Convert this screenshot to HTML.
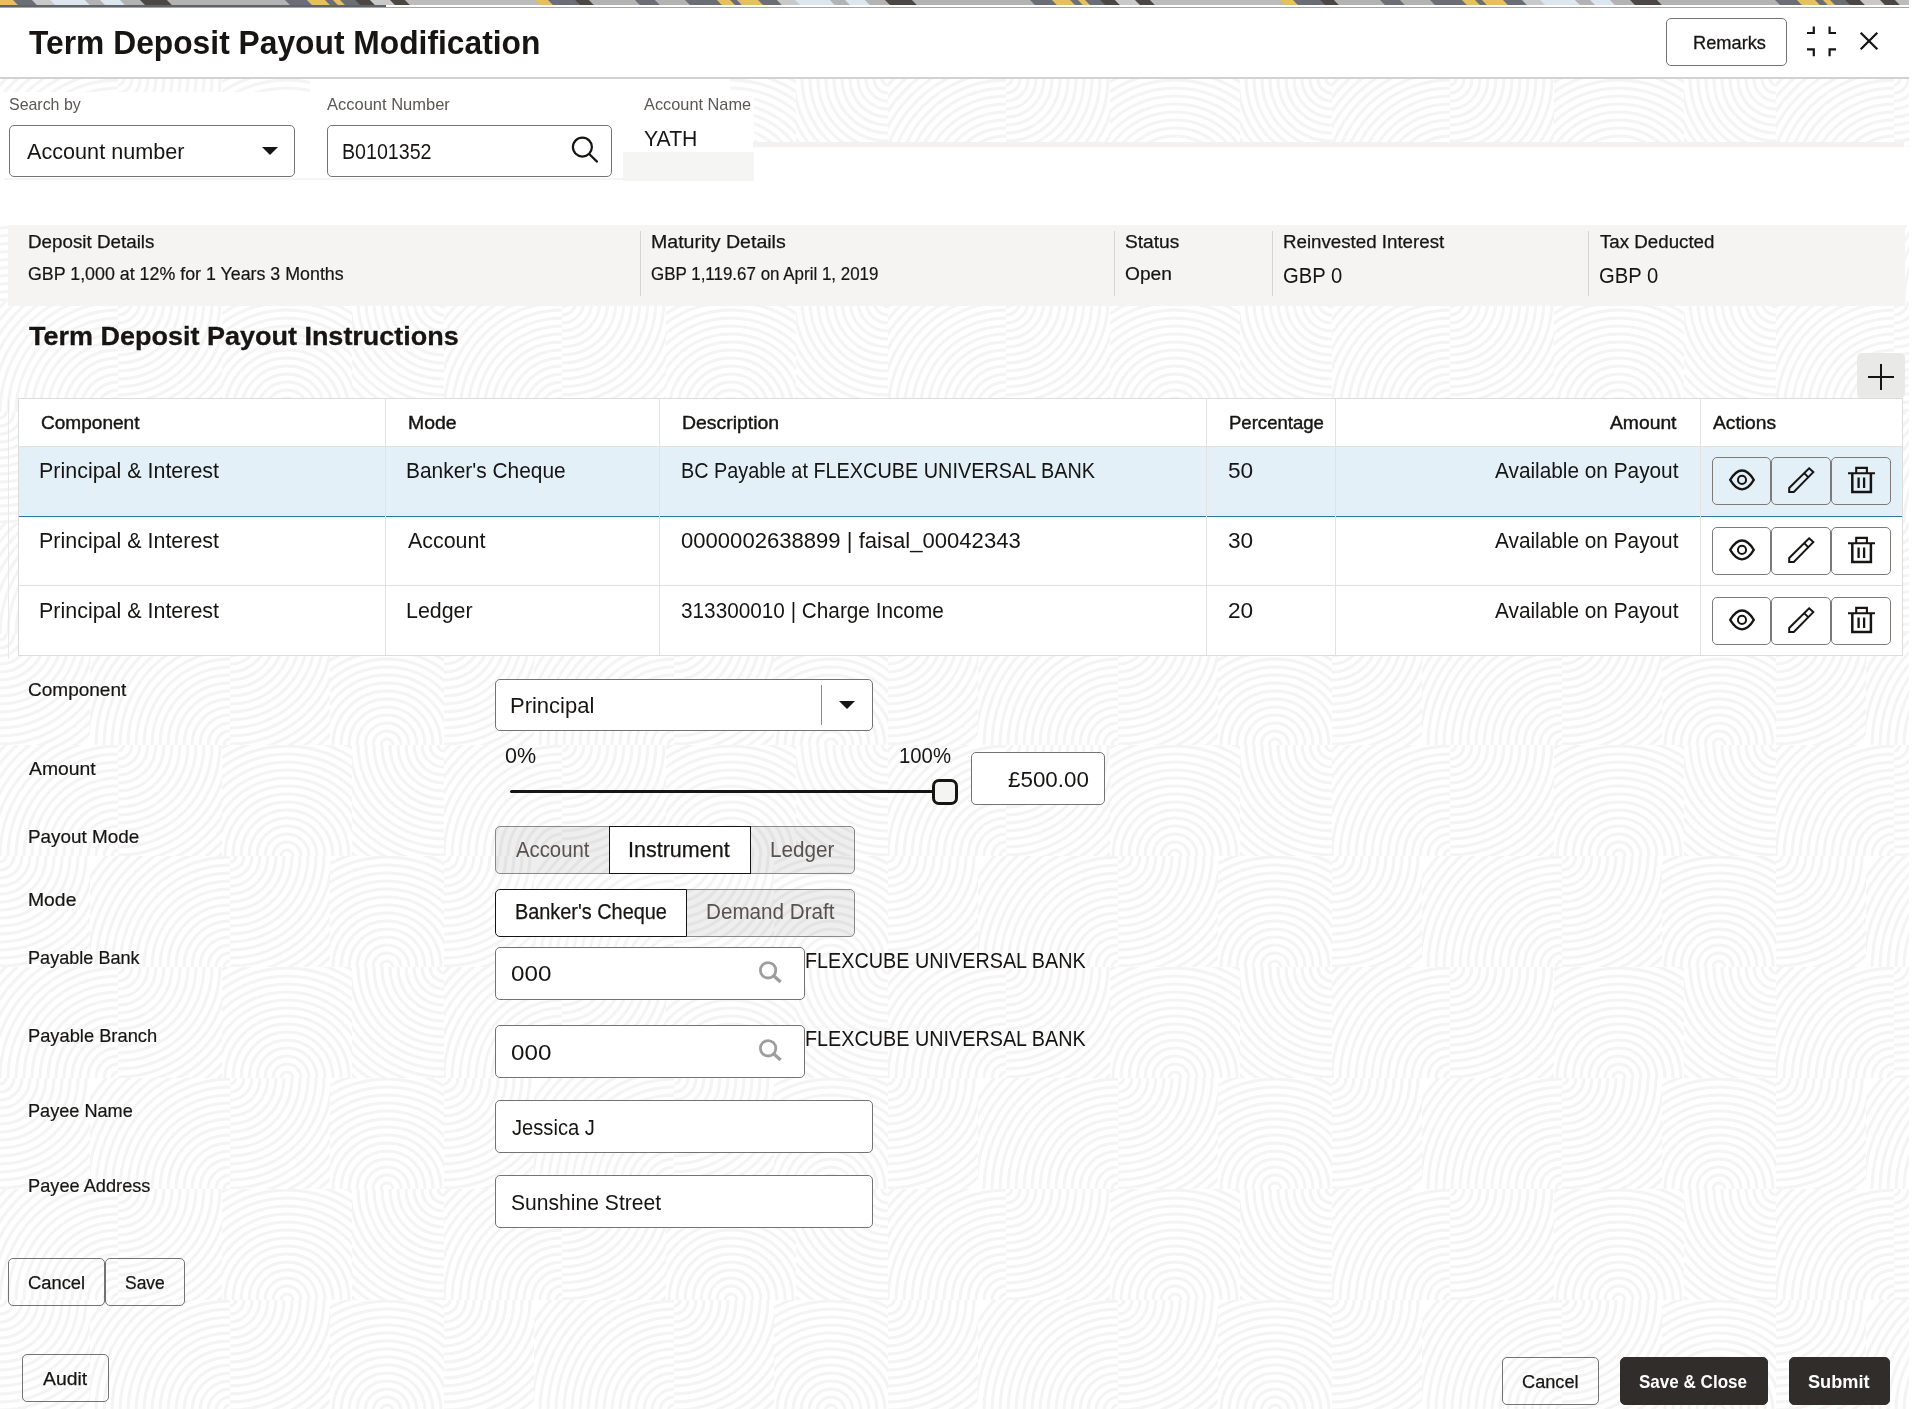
<!DOCTYPE html>
<html lang="en">
<head>
<meta charset="utf-8">
<title>Term Deposit Payout Modification</title>
<style>
html,body{margin:0;padding:0;background:#fff;}
body{width:1916px;height:1409px;overflow:hidden;position:relative;font-family:"Liberation Sans",sans-serif;}
#page{position:absolute;left:0;top:0;width:1916px;height:1409px;overflow:hidden;background:#fff;}
.abs,.t,.box,.btn,.seg{position:absolute;box-sizing:border-box;}
.t{white-space:pre;transform-origin:0 0;font-family:"Liberation Sans",sans-serif;}
#bg{left:0;top:79px;width:1909px;height:1330px;}
.white{background:#fff;}
.box{background:#fff;border:1px solid #76726f;border-radius:5px;}
.btn{background:transparent;border:1px solid #76726f;border-radius:5px;}
.btn.dark{background:#312d2a;border-color:#312d2a;}
.abtn{position:absolute;box-sizing:border-box;border:1px solid #7d7a78;border-radius:5px;}
.seg{border:1px solid #8b8885;background:rgba(22,21,19,0.07);}
.seg.sel{background:#fff;border-color:#161513;}
.vline{position:absolute;width:1px;background:#d6d4d2;}
.hline{position:absolute;height:1px;background:#e3e1df;}
svg{position:absolute;overflow:visible;}
</style>
</head>
<body>
<div id="page">
<!-- patterned page background -->
<svg id="bg" class="abs" width="1909" height="1330">
<defs><clipPath id="c0"><rect x="0" y="0" width="118" height="111"/></clipPath><clipPath id="c1"><rect x="118" y="0" width="104" height="111"/></clipPath><clipPath id="c2"><rect x="222" y="0" width="130" height="111"/></clipPath><clipPath id="c3"><rect x="352" y="0" width="92" height="111"/></clipPath><clipPath id="c4"><rect x="0" y="111" width="90" height="111"/></clipPath><clipPath id="c5"><rect x="90" y="111" width="140" height="111"/></clipPath><clipPath id="c6"><rect x="230" y="111" width="100" height="111"/></clipPath><clipPath id="c7"><rect x="330" y="111" width="114" height="111"/></clipPath>
<pattern id="pt" width="444" height="222" patternUnits="userSpaceOnUse">
<rect width="444" height="222" fill="#ffffff"/>
<g fill="none" stroke="#f4f4f4" stroke-width="3">
<g clip-path="url(#c0)"><circle cx="118" cy="111" r="6"/><circle cx="118" cy="111" r="14"/><circle cx="118" cy="111" r="22"/><circle cx="118" cy="111" r="30"/><circle cx="118" cy="111" r="38"/><circle cx="118" cy="111" r="46"/><circle cx="118" cy="111" r="54"/><circle cx="118" cy="111" r="62"/><circle cx="118" cy="111" r="70"/><circle cx="118" cy="111" r="78"/><circle cx="118" cy="111" r="86"/><circle cx="118" cy="111" r="94"/><circle cx="118" cy="111" r="102"/><circle cx="118" cy="111" r="110"/><circle cx="118" cy="111" r="118"/><circle cx="118" cy="111" r="126"/><circle cx="118" cy="111" r="134"/><circle cx="118" cy="111" r="142"/><circle cx="118" cy="111" r="150"/><circle cx="118" cy="111" r="158"/></g><g clip-path="url(#c1)"><circle cx="118" cy="0" r="6"/><circle cx="118" cy="0" r="14"/><circle cx="118" cy="0" r="22"/><circle cx="118" cy="0" r="30"/><circle cx="118" cy="0" r="38"/><circle cx="118" cy="0" r="46"/><circle cx="118" cy="0" r="54"/><circle cx="118" cy="0" r="62"/><circle cx="118" cy="0" r="70"/><circle cx="118" cy="0" r="78"/><circle cx="118" cy="0" r="86"/><circle cx="118" cy="0" r="94"/><circle cx="118" cy="0" r="102"/><circle cx="118" cy="0" r="110"/><circle cx="118" cy="0" r="118"/><circle cx="118" cy="0" r="126"/><circle cx="118" cy="0" r="134"/><circle cx="118" cy="0" r="142"/><circle cx="118" cy="0" r="150"/></g><g clip-path="url(#c2)"><circle cx="287" cy="111" r="6"/><circle cx="287" cy="111" r="14"/><circle cx="287" cy="111" r="22"/><circle cx="287" cy="111" r="30"/><circle cx="287" cy="111" r="38"/><circle cx="287" cy="111" r="46"/><circle cx="287" cy="111" r="54"/><circle cx="287" cy="111" r="62"/><circle cx="287" cy="111" r="70"/><circle cx="287" cy="111" r="78"/><circle cx="287" cy="111" r="86"/><circle cx="287" cy="111" r="94"/><circle cx="287" cy="111" r="102"/><circle cx="287" cy="111" r="110"/><circle cx="287" cy="111" r="118"/><circle cx="287" cy="111" r="126"/></g><g clip-path="url(#c3)"><circle cx="444" cy="0" r="6"/><circle cx="444" cy="0" r="14"/><circle cx="444" cy="0" r="22"/><circle cx="444" cy="0" r="30"/><circle cx="444" cy="0" r="38"/><circle cx="444" cy="0" r="46"/><circle cx="444" cy="0" r="54"/><circle cx="444" cy="0" r="62"/><circle cx="444" cy="0" r="70"/><circle cx="444" cy="0" r="78"/><circle cx="444" cy="0" r="86"/><circle cx="444" cy="0" r="94"/><circle cx="444" cy="0" r="102"/><circle cx="444" cy="0" r="110"/><circle cx="444" cy="0" r="118"/><circle cx="444" cy="0" r="126"/><circle cx="444" cy="0" r="134"/><circle cx="444" cy="0" r="142"/></g><g clip-path="url(#c4)"><circle cx="0" cy="111" r="6"/><circle cx="0" cy="111" r="14"/><circle cx="0" cy="111" r="22"/><circle cx="0" cy="111" r="30"/><circle cx="0" cy="111" r="38"/><circle cx="0" cy="111" r="46"/><circle cx="0" cy="111" r="54"/><circle cx="0" cy="111" r="62"/><circle cx="0" cy="111" r="70"/><circle cx="0" cy="111" r="78"/><circle cx="0" cy="111" r="86"/><circle cx="0" cy="111" r="94"/><circle cx="0" cy="111" r="102"/><circle cx="0" cy="111" r="110"/><circle cx="0" cy="111" r="118"/><circle cx="0" cy="111" r="126"/><circle cx="0" cy="111" r="134"/></g><g clip-path="url(#c5)"><circle cx="230" cy="222" r="6"/><circle cx="230" cy="222" r="14"/><circle cx="230" cy="222" r="22"/><circle cx="230" cy="222" r="30"/><circle cx="230" cy="222" r="38"/><circle cx="230" cy="222" r="46"/><circle cx="230" cy="222" r="54"/><circle cx="230" cy="222" r="62"/><circle cx="230" cy="222" r="70"/><circle cx="230" cy="222" r="78"/><circle cx="230" cy="222" r="86"/><circle cx="230" cy="222" r="94"/><circle cx="230" cy="222" r="102"/><circle cx="230" cy="222" r="110"/><circle cx="230" cy="222" r="118"/><circle cx="230" cy="222" r="126"/><circle cx="230" cy="222" r="134"/><circle cx="230" cy="222" r="142"/><circle cx="230" cy="222" r="150"/><circle cx="230" cy="222" r="158"/><circle cx="230" cy="222" r="166"/></g><g clip-path="url(#c6)"><circle cx="230" cy="111" r="6"/><circle cx="230" cy="111" r="14"/><circle cx="230" cy="111" r="22"/><circle cx="230" cy="111" r="30"/><circle cx="230" cy="111" r="38"/><circle cx="230" cy="111" r="46"/><circle cx="230" cy="111" r="54"/><circle cx="230" cy="111" r="62"/><circle cx="230" cy="111" r="70"/><circle cx="230" cy="111" r="78"/><circle cx="230" cy="111" r="86"/><circle cx="230" cy="111" r="94"/><circle cx="230" cy="111" r="102"/><circle cx="230" cy="111" r="110"/><circle cx="230" cy="111" r="118"/><circle cx="230" cy="111" r="126"/><circle cx="230" cy="111" r="134"/><circle cx="230" cy="111" r="142"/></g><g clip-path="url(#c7)"><circle cx="387" cy="222" r="6"/><circle cx="387" cy="222" r="14"/><circle cx="387" cy="222" r="22"/><circle cx="387" cy="222" r="30"/><circle cx="387" cy="222" r="38"/><circle cx="387" cy="222" r="46"/><circle cx="387" cy="222" r="54"/><circle cx="387" cy="222" r="62"/><circle cx="387" cy="222" r="70"/><circle cx="387" cy="222" r="78"/><circle cx="387" cy="222" r="86"/><circle cx="387" cy="222" r="94"/><circle cx="387" cy="222" r="102"/><circle cx="387" cy="222" r="110"/><circle cx="387" cy="222" r="118"/></g>
</g>
</pattern>
</defs>
<rect width="1909" height="1330" fill="url(#pt)"/>
</svg>

<!-- top banner strip -->
<svg class="abs" style="left:0;top:0;overflow:hidden" width="1909" height="8">
<rect width="1909" height="6" fill="#a9a9a8"/>
<g transform="skewX(45)"><rect x="-28" y="0" width="13.3" height="5.2" fill="#e6bf5f"/><rect x="-15" y="0" width="7.3" height="5.2" fill="#6b6f75"/><rect x="-8" y="0" width="3.3" height="5.2" fill="#e6bf5f"/><rect x="-5" y="0" width="18.3" height="5.2" fill="#e6bf5f"/><rect x="13" y="0" width="19.3" height="5.2" fill="#6b6f75"/><rect x="32" y="0" width="18.3" height="5.2" fill="#c9c9c9"/><rect x="50" y="0" width="35.3" height="5.2" fill="#dbe6ef"/><rect x="85" y="0" width="15.3" height="5.2" fill="#b3b3b3"/><rect x="100" y="0" width="20.3" height="5.2" fill="#dbe6ef"/><rect x="120" y="0" width="20.3" height="5.2" fill="#b3b3b3"/><rect x="140" y="0" width="27.3" height="5.2" fill="#4a4744"/><rect x="167" y="0" width="118.3" height="5.2" fill="#b3b3b3"/><rect x="285" y="0" width="22.3" height="5.2" fill="#6b6f75"/><rect x="307" y="0" width="18.3" height="5.2" fill="#e6bf5f"/><rect x="325" y="0" width="8.3" height="5.2" fill="#6b6f75"/><rect x="333" y="0" width="7.3" height="5.2" fill="#e6bf5f"/><rect x="340" y="0" width="15.3" height="5.2" fill="#6b6f75"/><rect x="355" y="0" width="15.3" height="5.2" fill="#4a4744"/><rect x="370" y="0" width="20.3" height="5.2" fill="#c9c9c9"/><rect x="390" y="0" width="15.3" height="5.2" fill="#4a4744"/><rect x="405" y="0" width="130.3" height="5.2" fill="#bcbcbc"/><rect x="535" y="0" width="13.3" height="5.2" fill="#e6bf5f"/><rect x="548" y="0" width="27.3" height="5.2" fill="#6b6f75"/><rect x="575" y="0" width="14.3" height="5.2" fill="#4a4744"/><rect x="589" y="0" width="46.3" height="5.2" fill="#b3b3b3"/><rect x="635" y="0" width="20.3" height="5.2" fill="#6b6f75"/><rect x="655" y="0" width="30.3" height="5.2" fill="#b3b3b3"/><rect x="685" y="0" width="32.3" height="5.2" fill="#6b6f75"/><rect x="717" y="0" width="13.3" height="5.2" fill="#e6bf5f"/><rect x="730" y="0" width="7.3" height="5.2" fill="#6b6f75"/><rect x="737" y="0" width="3.3" height="5.2" fill="#e6bf5f"/><rect x="740" y="0" width="18.3" height="5.2" fill="#e6bf5f"/><rect x="758" y="0" width="19.3" height="5.2" fill="#6b6f75"/><rect x="777" y="0" width="18.3" height="5.2" fill="#c9c9c9"/><rect x="795" y="0" width="35.3" height="5.2" fill="#dbe6ef"/><rect x="830" y="0" width="15.3" height="5.2" fill="#b3b3b3"/><rect x="845" y="0" width="20.3" height="5.2" fill="#dbe6ef"/><rect x="865" y="0" width="20.3" height="5.2" fill="#b3b3b3"/><rect x="885" y="0" width="27.3" height="5.2" fill="#4a4744"/><rect x="912" y="0" width="118.3" height="5.2" fill="#b3b3b3"/><rect x="1030" y="0" width="22.3" height="5.2" fill="#6b6f75"/><rect x="1052" y="0" width="18.3" height="5.2" fill="#e6bf5f"/><rect x="1070" y="0" width="8.3" height="5.2" fill="#6b6f75"/><rect x="1078" y="0" width="7.3" height="5.2" fill="#e6bf5f"/><rect x="1085" y="0" width="15.3" height="5.2" fill="#6b6f75"/><rect x="1100" y="0" width="15.3" height="5.2" fill="#4a4744"/><rect x="1115" y="0" width="20.3" height="5.2" fill="#c9c9c9"/><rect x="1135" y="0" width="15.3" height="5.2" fill="#4a4744"/><rect x="1150" y="0" width="130.3" height="5.2" fill="#bcbcbc"/><rect x="1280" y="0" width="13.3" height="5.2" fill="#e6bf5f"/><rect x="1293" y="0" width="27.3" height="5.2" fill="#6b6f75"/><rect x="1320" y="0" width="14.3" height="5.2" fill="#4a4744"/><rect x="1334" y="0" width="46.3" height="5.2" fill="#b3b3b3"/><rect x="1380" y="0" width="20.3" height="5.2" fill="#6b6f75"/><rect x="1400" y="0" width="30.3" height="5.2" fill="#b3b3b3"/><rect x="1430" y="0" width="32.3" height="5.2" fill="#6b6f75"/><rect x="1462" y="0" width="13.3" height="5.2" fill="#e6bf5f"/><rect x="1475" y="0" width="7.3" height="5.2" fill="#6b6f75"/><rect x="1482" y="0" width="3.3" height="5.2" fill="#e6bf5f"/><rect x="1485" y="0" width="18.3" height="5.2" fill="#e6bf5f"/><rect x="1503" y="0" width="19.3" height="5.2" fill="#6b6f75"/><rect x="1522" y="0" width="18.3" height="5.2" fill="#c9c9c9"/><rect x="1540" y="0" width="35.3" height="5.2" fill="#dbe6ef"/><rect x="1575" y="0" width="15.3" height="5.2" fill="#b3b3b3"/><rect x="1590" y="0" width="20.3" height="5.2" fill="#dbe6ef"/><rect x="1610" y="0" width="20.3" height="5.2" fill="#b3b3b3"/><rect x="1630" y="0" width="27.3" height="5.2" fill="#4a4744"/><rect x="1657" y="0" width="118.3" height="5.2" fill="#b3b3b3"/><rect x="1775" y="0" width="22.3" height="5.2" fill="#6b6f75"/><rect x="1797" y="0" width="18.3" height="5.2" fill="#e6bf5f"/><rect x="1815" y="0" width="8.3" height="5.2" fill="#6b6f75"/><rect x="1823" y="0" width="7.3" height="5.2" fill="#e6bf5f"/><rect x="1830" y="0" width="15.3" height="5.2" fill="#6b6f75"/><rect x="1845" y="0" width="15.3" height="5.2" fill="#4a4744"/><rect x="1860" y="0" width="20.3" height="5.2" fill="#c9c9c9"/><rect x="1880" y="0" width="15.3" height="5.2" fill="#4a4744"/><rect x="1895" y="0" width="130.3" height="5.2" fill="#bcbcbc"/></g>
<rect x="0" y="5" width="1909" height="3" fill="#ffffff"/>
<rect x="0" y="5" width="386" height="2.3" fill="#5f646a"/>
<rect x="0" y="7.2" width="386" height="0.8" fill="#9a9b9d"/>
<rect x="386" y="7" width="1523" height="1" fill="#a3a3a3"/>
</svg>

<!-- header -->
<div class="abs white" style="left:0;top:8px;width:1909px;height:69px"></div>
<div class="abs" style="left:0;top:77px;width:1909px;height:2px;background:#d4d2d0"></div>
<div class="btn" style="left:1666px;top:18px;width:121px;height:48px"></div>
<svg style="left:1807px;top:26.5px" width="29" height="29" viewBox="0 0 29 29" fill="none" stroke="#161513" stroke-width="2.2">
<path d="M0 6H6.8V-0.5M29 6H22.6V-0.5M0 22.3H6.8V29.3M29 22.3H22.6V29.3"/>
</svg>
<svg style="left:1860px;top:32px" width="18" height="18" viewBox="0 0 18 18" fill="none" stroke="#161513" stroke-width="2.3">
<path d="M0.7 0.7L17.3 17.3M17.3 0.7L0.7 17.3"/>
</svg>

<!-- search area -->
<div class="abs white" style="left:310px;top:79px;width:420px;height:14px"></div>
<div class="abs white" style="left:0;top:92px;width:754px;height:56px"></div>
<div class="abs white" style="left:0;top:147px;width:1909px;height:78px"></div>
<div class="abs" style="left:753px;top:142px;width:1151px;height:5px;background:#f3f2f1"></div>
<div class="abs" style="left:623px;top:152px;width:131px;height:29px;background:#f5f5f4"></div>
<div class="abs" style="left:4px;top:178px;width:620px;height:2px;background:#f4f4f4"></div>
<div class="box" style="left:9px;top:125px;width:286px;height:52px"></div>
<svg style="left:262px;top:147px" width="16" height="8" viewBox="0 0 16 8"><path d="M0 0H16L8 8Z" fill="#161513"/></svg>
<div class="box" style="left:327px;top:125px;width:285px;height:52px"></div>
<svg style="left:570px;top:135px" width="30" height="30" viewBox="0 0 30 30" fill="none" stroke="#161513" stroke-width="2.2"><circle cx="12.4" cy="12.1" r="9.5"/><path d="M19.2 19L27 26.6" stroke-linecap="round"/></svg>

<!-- info bar -->
<div class="abs" style="left:8px;top:225px;width:1897px;height:81px;background:#f5f4f2"></div>
<div class="vline" style="left:640px;top:231px;height:65px"></div>
<div class="vline" style="left:1114px;top:231px;height:65px"></div>
<div class="vline" style="left:1272px;top:231px;height:65px"></div>
<div class="vline" style="left:1588px;top:231px;height:65px"></div>

<!-- add button -->
<div class="abs" style="left:1857px;top:353px;width:48px;height:45px;background:#e9e9e8;border-radius:5px"></div>
<svg style="left:1868px;top:364px" width="26" height="26" viewBox="0 0 26 26" fill="none" stroke="#161513" stroke-width="2"><path d="M0 13H26M13 0V26"/></svg>

<!-- table -->
<div class="abs" style="left:8px;top:399px;width:1px;height:260px;background:#e9e9e9"></div>
<div class="abs" style="left:18px;top:398px;width:1885px;height:258px;background:#fff;border:1px solid #dedcda"></div>
<div class="abs" style="left:19px;top:447px;width:1883px;height:69px;background:#e4f0f7"></div>
<div class="hline" style="left:19px;top:446px;width:1883px"></div>
<div class="abs" style="left:19px;top:515.5px;width:1883px;height:1.5px;background:#2b7ca2"></div>
<div class="hline" style="left:19px;top:585px;width:1883px"></div>
<div class="vline" style="left:385px;top:399px;height:256px;background:#e3e2e0"></div>
<div class="vline" style="left:659px;top:399px;height:256px;background:#e3e2e0"></div>
<div class="vline" style="left:1206px;top:399px;height:256px;background:#e3e2e0"></div>
<div class="vline" style="left:1335px;top:399px;height:256px;background:#e3e2e0"></div>
<div class="vline" style="left:1700px;top:399px;height:256px;background:#e3e2e0"></div>
<div class="abtn" style="left:1712px;top:457px;width:59px;height:48px"></div>
<div class="abtn" style="left:1770.8px;top:457px;width:60px;height:48px"></div>
<div class="abtn" style="left:1831px;top:457px;width:60px;height:48px"></div>
<svg style="left:0;top:0" width="1" height="1" fill="none" stroke="#161513"><path stroke-width="2.3" stroke-linejoin="miter" d="M1730.2 479.9C1734 473.5 1737.4 470.5 1742 470.5C1746.6 470.5 1750 473.5 1753.8 479.9C1750 486.29999999999995 1746.6 489.29999999999995 1742 489.29999999999995C1737.4 489.29999999999995 1734 486.29999999999995 1730.2 479.9Z"/><circle cx="1742" cy="479.9" r="4.05" stroke-width="2"/><path stroke-width="2" stroke-linejoin="miter" d="M1809.1 468.3L1813.3 472.1L1793.8 491.9H1789.2V488Z M1804.0 472.9L1807.9 476.9"/><path stroke-width="2.1" d="M1848 473.2H1875M1856.2 473V467.9H1866.9V473"/><path stroke-width="2.5" d="M1852.3 473.5V491.9H1870.9V473.5"/><path stroke-width="2.3" d="M1858.6 477.6V487.9M1864.1 477.6V487.9"/></svg>
<div class="abtn" style="left:1712px;top:527px;width:59px;height:48px"></div>
<div class="abtn" style="left:1770.8px;top:527px;width:60px;height:48px"></div>
<div class="abtn" style="left:1831px;top:527px;width:60px;height:48px"></div>
<svg style="left:0;top:0" width="1" height="1" fill="none" stroke="#161513"><path stroke-width="2.3" stroke-linejoin="miter" d="M1730.2 549.9C1734 543.5 1737.4 540.5 1742 540.5C1746.6 540.5 1750 543.5 1753.8 549.9C1750 556.3 1746.6 559.3 1742 559.3C1737.4 559.3 1734 556.3 1730.2 549.9Z"/><circle cx="1742" cy="549.9" r="4.05" stroke-width="2"/><path stroke-width="2" stroke-linejoin="miter" d="M1809.1 538.3L1813.3 542.1L1793.8 561.9H1789.2V558Z M1804.0 542.9L1807.9 546.9"/><path stroke-width="2.1" d="M1848 543.2H1875M1856.2 543V537.9H1866.9V543"/><path stroke-width="2.5" d="M1852.3 543.5V561.9H1870.9V543.5"/><path stroke-width="2.3" d="M1858.6 547.6V557.9M1864.1 547.6V557.9"/></svg>
<div class="abtn" style="left:1712px;top:597px;width:59px;height:48px"></div>
<div class="abtn" style="left:1770.8px;top:597px;width:60px;height:48px"></div>
<div class="abtn" style="left:1831px;top:597px;width:60px;height:48px"></div>
<svg style="left:0;top:0" width="1" height="1" fill="none" stroke="#161513"><path stroke-width="2.3" stroke-linejoin="miter" d="M1730.2 619.9C1734 613.5 1737.4 610.5 1742 610.5C1746.6 610.5 1750 613.5 1753.8 619.9C1750 626.3 1746.6 629.3 1742 629.3C1737.4 629.3 1734 626.3 1730.2 619.9Z"/><circle cx="1742" cy="619.9" r="4.05" stroke-width="2"/><path stroke-width="2" stroke-linejoin="miter" d="M1809.1 608.3L1813.3 612.1L1793.8 631.9H1789.2V628Z M1804.0 612.9L1807.9 616.9"/><path stroke-width="2.1" d="M1848 613.2H1875M1856.2 613V607.9H1866.9V613"/><path stroke-width="2.5" d="M1852.3 613.5V631.9H1870.9V613.5"/><path stroke-width="2.3" d="M1858.6 617.6V627.9M1864.1 617.6V627.9"/></svg>

<!-- form controls -->
<div class="box" style="left:495px;top:679px;width:378px;height:52px"></div>
<div class="vline" style="left:821px;top:685px;height:40px;background:#8b8885"></div>
<svg style="left:839px;top:700.5px" width="16" height="8" viewBox="0 0 16 8"><path d="M0 0H16L8 8Z" fill="#161513"/></svg>
<div class="abs" style="left:510px;top:790px;width:430px;height:3.4px;background:#161513;border-radius:2px"></div>
<div class="abs" style="left:932px;top:779px;width:26px;height:26px;border:3.3px solid #161513;border-radius:7px;background:#f4f4f3"></div>
<div class="box" style="left:971px;top:752px;width:134px;height:53px"></div>

<div class="seg" style="left:495px;top:826px;width:115px;height:48px;border-radius:5px 0 0 5px"></div>
<div class="seg" style="left:750px;top:826px;width:105px;height:48px;border-radius:0 5px 5px 0"></div>
<div class="seg sel" style="left:609px;top:826px;width:142px;height:48px"></div>
<div class="seg" style="left:686px;top:889px;width:169px;height:48px;border-radius:0 5px 5px 0"></div>
<div class="seg sel" style="left:495px;top:889px;width:192px;height:48px;border-radius:5px 0 0 5px"></div>

<div class="box" style="left:495px;top:947px;width:310px;height:53px"></div>
<div class="box" style="left:495px;top:1025px;width:310px;height:53px"></div>
<svg style="left:757px;top:960px" width="26" height="26" viewBox="0 0 26 26" fill="none" stroke="#9d9d9d" stroke-width="2.8"><circle cx="11.1" cy="10.3" r="7.7"/><path d="M16.6 15.7L23.6 21.9" stroke-width="3.3"/></svg>
<svg style="left:757px;top:1038px" width="26" height="26" viewBox="0 0 26 26" fill="none" stroke="#9d9d9d" stroke-width="2.8"><circle cx="11.1" cy="10.3" r="7.7"/><path d="M16.6 15.7L23.6 21.9" stroke-width="3.3"/></svg>
<div class="box" style="left:495px;top:1100px;width:378px;height:53px"></div>
<div class="box" style="left:495px;top:1175px;width:378px;height:53px"></div>

<!-- buttons -->
<div class="btn" style="left:8px;top:1258px;width:97px;height:48px"></div>
<div class="btn" style="left:105px;top:1258px;width:80px;height:48px"></div>
<div class="btn" style="left:22px;top:1354px;width:87px;height:48px"></div>
<div class="btn" style="left:1502px;top:1357px;width:97px;height:48px"></div>
<div class="btn dark" style="left:1620px;top:1357px;width:148px;height:48px"></div>
<div class="btn dark" style="left:1789px;top:1357px;width:101px;height:48px"></div>

<!-- all text -->
<div id="txt" style="position:absolute;left:0;top:0;width:1916px;height:1409px;will-change:transform">
<span class=t style="left:28.6px;top:26px;font-size:33.5px;line-height:33.5px;color:#161513;transform:scaleX(0.9486);font-weight:700;">Term Deposit Payout Modification</span>
<span class=t style="left:1693.0px;top:33px;font-size:19px;line-height:19px;color:#161513;transform:scaleX(0.9600);-webkit-text-stroke:0.3px #161513;">Remarks</span>
<span class=t style="left:8.7px;top:96px;font-size:17px;line-height:17px;color:#5b5754;transform:scaleX(0.9373);">Search by</span>
<span class=t style="left:327.3px;top:96px;font-size:17px;line-height:17px;color:#5b5754;transform:scaleX(0.9698);">Account Number</span>
<span class=t style="left:644.4px;top:96px;font-size:17px;line-height:17px;color:#5b5754;transform:scaleX(0.9604);">Account Name</span>
<span class=t style="left:26.7px;top:142px;font-size:21.5px;line-height:21.5px;color:#161513;transform:scaleX(1.0058);">Account number</span>
<span class=t style="left:342.3px;top:142px;font-size:21.5px;line-height:21.5px;color:#161513;transform:scaleX(0.9126);">B0101352</span>
<span class=t style="left:643.7px;top:129px;font-size:21.5px;line-height:21.5px;color:#161513;transform:scaleX(0.9863);">YATH</span>
<span class=t style="left:28.2px;top:233px;font-size:18px;line-height:18px;color:#161513;transform:scaleX(1.0442);-webkit-text-stroke:0.25px #161513;">Deposit Details</span>
<span class=t style="left:28.2px;top:265px;font-size:18px;line-height:18px;color:#161513;transform:scaleX(0.9899);-webkit-text-stroke:0.2px #161513;">GBP 1,000 at 12% for 1 Years 3 Months</span>
<span class=t style="left:651.0px;top:233px;font-size:18px;line-height:18px;color:#161513;transform:scaleX(1.0862);-webkit-text-stroke:0.25px #161513;">Maturity Details</span>
<span class=t style="left:651.0px;top:265px;font-size:18px;line-height:18px;color:#161513;transform:scaleX(0.9417);-webkit-text-stroke:0.2px #161513;">GBP 1,119.67 on April 1, 2019</span>
<span class=t style="left:1124.6px;top:233px;font-size:18px;line-height:18px;color:#161513;transform:scaleX(1.0640);-webkit-text-stroke:0.25px #161513;">Status</span>
<span class=t style="left:1124.6px;top:265px;font-size:18px;line-height:18px;color:#161513;transform:scaleX(1.0643);-webkit-text-stroke:0.2px #161513;">Open</span>
<span class=t style="left:1283.0px;top:233px;font-size:18px;line-height:18px;color:#161513;transform:scaleX(1.0396);-webkit-text-stroke:0.25px #161513;">Reinvested Interest</span>
<span class=t style="left:1283.0px;top:266px;font-size:21.3px;line-height:21.3px;color:#161513;transform:scaleX(0.9492);">GBP 0</span>
<span class=t style="left:1600.4px;top:233px;font-size:18px;line-height:18px;color:#161513;transform:scaleX(1.0394);-webkit-text-stroke:0.25px #161513;">Tax Deducted</span>
<span class=t style="left:1599.4px;top:266px;font-size:21.3px;line-height:21.3px;color:#161513;transform:scaleX(0.9492);">GBP 0</span>
<span class=t style="left:28.8px;top:323px;font-size:26.6px;line-height:26.6px;color:#161513;transform:scaleX(1.0147);font-weight:700;-webkit-text-stroke:0.3px #161513;">Term Deposit Payout Instructions</span>
<span class=t style="left:40.6px;top:414px;font-size:18.2px;line-height:18.2px;color:#161513;transform:scaleX(1.0473);-webkit-text-stroke:0.4px #161513;">Component</span>
<span class=t style="left:408.0px;top:414px;font-size:18.2px;line-height:18.2px;color:#161513;transform:scaleX(1.0682);-webkit-text-stroke:0.4px #161513;">Mode</span>
<span class=t style="left:682.2px;top:414px;font-size:18.2px;line-height:18.2px;color:#161513;transform:scaleX(1.0674);-webkit-text-stroke:0.4px #161513;">Description</span>
<span class=t style="left:1229.0px;top:414px;font-size:18.2px;line-height:18.2px;color:#161513;transform:scaleX(1.0196);-webkit-text-stroke:0.4px #161513;">Percentage</span>
<span class=t style="left:1610.2px;top:414px;font-size:18.2px;line-height:18.2px;color:#161513;transform:scaleX(1.0603);-webkit-text-stroke:0.4px #161513;">Amount</span>
<span class=t style="left:1712.5px;top:414px;font-size:18.2px;line-height:18.2px;color:#161513;transform:scaleX(1.0576);-webkit-text-stroke:0.4px #161513;">Actions</span>
<span class=t style="left:39.0px;top:461px;font-size:21.3px;line-height:21.3px;color:#161513;transform:scaleX(1.0074);">Principal &amp; Interest</span>
<span class=t style="left:406.4px;top:461px;font-size:21.3px;line-height:21.3px;color:#161513;transform:scaleX(0.9812);">Banker&#x27;s Cheque</span>
<span class=t style="left:680.6px;top:461px;font-size:21.3px;line-height:21.3px;color:#161513;transform:scaleX(0.9321);">BC Payable at FLEXCUBE UNIVERSAL BANK</span>
<span class=t style="left:1228.0px;top:461px;font-size:21.3px;line-height:21.3px;color:#161513;transform:scaleX(1.0636);">50</span>
<span class=t style="left:1495.0px;top:461px;font-size:21.3px;line-height:21.3px;color:#161513;transform:scaleX(0.9766);">Available on Payout</span>
<span class=t style="left:39.0px;top:531px;font-size:21.3px;line-height:21.3px;color:#161513;transform:scaleX(1.0074);">Principal &amp; Interest</span>
<span class=t style="left:407.6px;top:531px;font-size:21.3px;line-height:21.3px;color:#161513;transform:scaleX(1.0052);">Account</span>
<span class=t style="left:681.0px;top:531px;font-size:21.3px;line-height:21.3px;color:#161513;transform:scaleX(1.0368);">0000002638899 | faisal_00042343</span>
<span class=t style="left:1228.0px;top:531px;font-size:21.3px;line-height:21.3px;color:#161513;transform:scaleX(1.0636);">30</span>
<span class=t style="left:1495.0px;top:531px;font-size:21.3px;line-height:21.3px;color:#161513;transform:scaleX(0.9766);">Available on Payout</span>
<span class=t style="left:39.0px;top:601px;font-size:21.3px;line-height:21.3px;color:#161513;transform:scaleX(1.0074);">Principal &amp; Interest</span>
<span class=t style="left:406.4px;top:601px;font-size:21.3px;line-height:21.3px;color:#161513;transform:scaleX(1.0047);">Ledger</span>
<span class=t style="left:681.0px;top:601px;font-size:21.3px;line-height:21.3px;color:#161513;transform:scaleX(0.9746);">313300010 | Charge Income</span>
<span class=t style="left:1228.0px;top:601px;font-size:21.3px;line-height:21.3px;color:#161513;transform:scaleX(1.0636);">20</span>
<span class=t style="left:1495.0px;top:601px;font-size:21.3px;line-height:21.3px;color:#161513;transform:scaleX(0.9766);">Available on Payout</span>
<span class=t style="left:28.1px;top:681px;font-size:18.2px;line-height:18.2px;color:#161513;transform:scaleX(1.0452);-webkit-text-stroke:0.2px #161513;">Component</span>
<span class=t style="left:29.1px;top:760px;font-size:18.2px;line-height:18.2px;color:#161513;transform:scaleX(1.0635);-webkit-text-stroke:0.2px #161513;">Amount</span>
<span class=t style="left:28.1px;top:828px;font-size:18.2px;line-height:18.2px;color:#161513;transform:scaleX(1.0381);-webkit-text-stroke:0.2px #161513;">Payout Mode</span>
<span class=t style="left:28.1px;top:891px;font-size:18.2px;line-height:18.2px;color:#161513;transform:scaleX(1.0636);-webkit-text-stroke:0.2px #161513;">Mode</span>
<span class=t style="left:28.1px;top:949px;font-size:18.2px;line-height:18.2px;color:#161513;transform:scaleX(0.9946);-webkit-text-stroke:0.2px #161513;">Payable Bank</span>
<span class=t style="left:28.1px;top:1027px;font-size:18.2px;line-height:18.2px;color:#161513;transform:scaleX(1.0056);-webkit-text-stroke:0.2px #161513;">Payable Branch</span>
<span class=t style="left:28.1px;top:1102px;font-size:18.2px;line-height:18.2px;color:#161513;transform:scaleX(0.9961);-webkit-text-stroke:0.2px #161513;">Payee Name</span>
<span class=t style="left:28.1px;top:1177px;font-size:18.2px;line-height:18.2px;color:#161513;transform:scaleX(1.0000);-webkit-text-stroke:0.2px #161513;">Payee Address</span>
<span class=t style="left:510.2px;top:696px;font-size:21.3px;line-height:21.3px;color:#161513;transform:scaleX(1.0321);">Principal</span>
<span class=t style="left:504.7px;top:746px;font-size:21.3px;line-height:21.3px;color:#161513;transform:scaleX(1.0103);">0%</span>
<span class=t style="left:898.6px;top:746px;font-size:21.3px;line-height:21.3px;color:#161513;transform:scaleX(0.9538);">100%</span>
<span class=t style="left:1007.8px;top:770px;font-size:21.3px;line-height:21.3px;color:#161513;transform:scaleX(1.0507);">£500.00</span>
<span class=t style="left:515.8px;top:840px;font-size:21.3px;line-height:21.3px;color:#56524f;transform:scaleX(0.9532);">Account</span>
<span class=t style="left:628.4px;top:840px;font-size:21.3px;line-height:21.3px;color:#161513;transform:scaleX(1.0101);-webkit-text-stroke:0.25px #161513;">Instrument</span>
<span class=t style="left:769.6px;top:840px;font-size:21.3px;line-height:21.3px;color:#56524f;transform:scaleX(0.9703);">Ledger</span>
<span class=t style="left:514.8px;top:902px;font-size:21.3px;line-height:21.3px;color:#161513;transform:scaleX(0.9335);-webkit-text-stroke:0.25px #161513;">Banker&#x27;s Cheque</span>
<span class=t style="left:705.6px;top:902px;font-size:21.3px;line-height:21.3px;color:#56524f;transform:scaleX(0.9700);">Demand Draft</span>
<span class=t style="left:510.7px;top:964px;font-size:21.3px;line-height:21.3px;color:#161513;transform:scaleX(1.1353);">000</span>
<span class=t style="left:510.7px;top:1043px;font-size:21.3px;line-height:21.3px;color:#161513;transform:scaleX(1.1353);">000</span>
<span class=t style="left:804.7px;top:951px;font-size:21.3px;line-height:21.3px;color:#161513;transform:scaleX(0.9290);">FLEXCUBE UNIVERSAL BANK</span>
<span class=t style="left:804.7px;top:1029px;font-size:21.3px;line-height:21.3px;color:#161513;transform:scaleX(0.9290);">FLEXCUBE UNIVERSAL BANK</span>
<span class=t style="left:512.0px;top:1118px;font-size:21.3px;line-height:21.3px;color:#161513;transform:scaleX(0.9465);">Jessica J</span>
<span class=t style="left:511.0px;top:1193px;font-size:21.3px;line-height:21.3px;color:#161513;transform:scaleX(0.9907);">Sunshine Street</span>
<span class=t style="left:27.8px;top:1274px;font-size:18.8px;line-height:18.8px;color:#161513;transform:scaleX(0.9768);-webkit-text-stroke:0.25px #161513;">Cancel</span>
<span class=t style="left:124.6px;top:1274px;font-size:18.8px;line-height:18.8px;color:#161513;transform:scaleX(0.9293);-webkit-text-stroke:0.25px #161513;">Save</span>
<span class=t style="left:43.2px;top:1370px;font-size:18.8px;line-height:18.8px;color:#161513;transform:scaleX(1.0302);-webkit-text-stroke:0.25px #161513;">Audit</span>
<span class=t style="left:1522.2px;top:1373px;font-size:18.3px;line-height:18.3px;color:#161513;transform:scaleX(0.9945);-webkit-text-stroke:0.25px #161513;">Cancel</span>
<span class=t style="left:1639.3px;top:1373px;font-size:18.5px;line-height:18.5px;color:#fff;transform:scaleX(0.9216);font-weight:700;">Save &amp; Close</span>
<span class=t style="left:1808.2px;top:1373px;font-size:18.5px;line-height:18.5px;color:#fff;transform:scaleX(0.9820);font-weight:700;">Submit</span>
</div>
</div>
</body>
</html>
